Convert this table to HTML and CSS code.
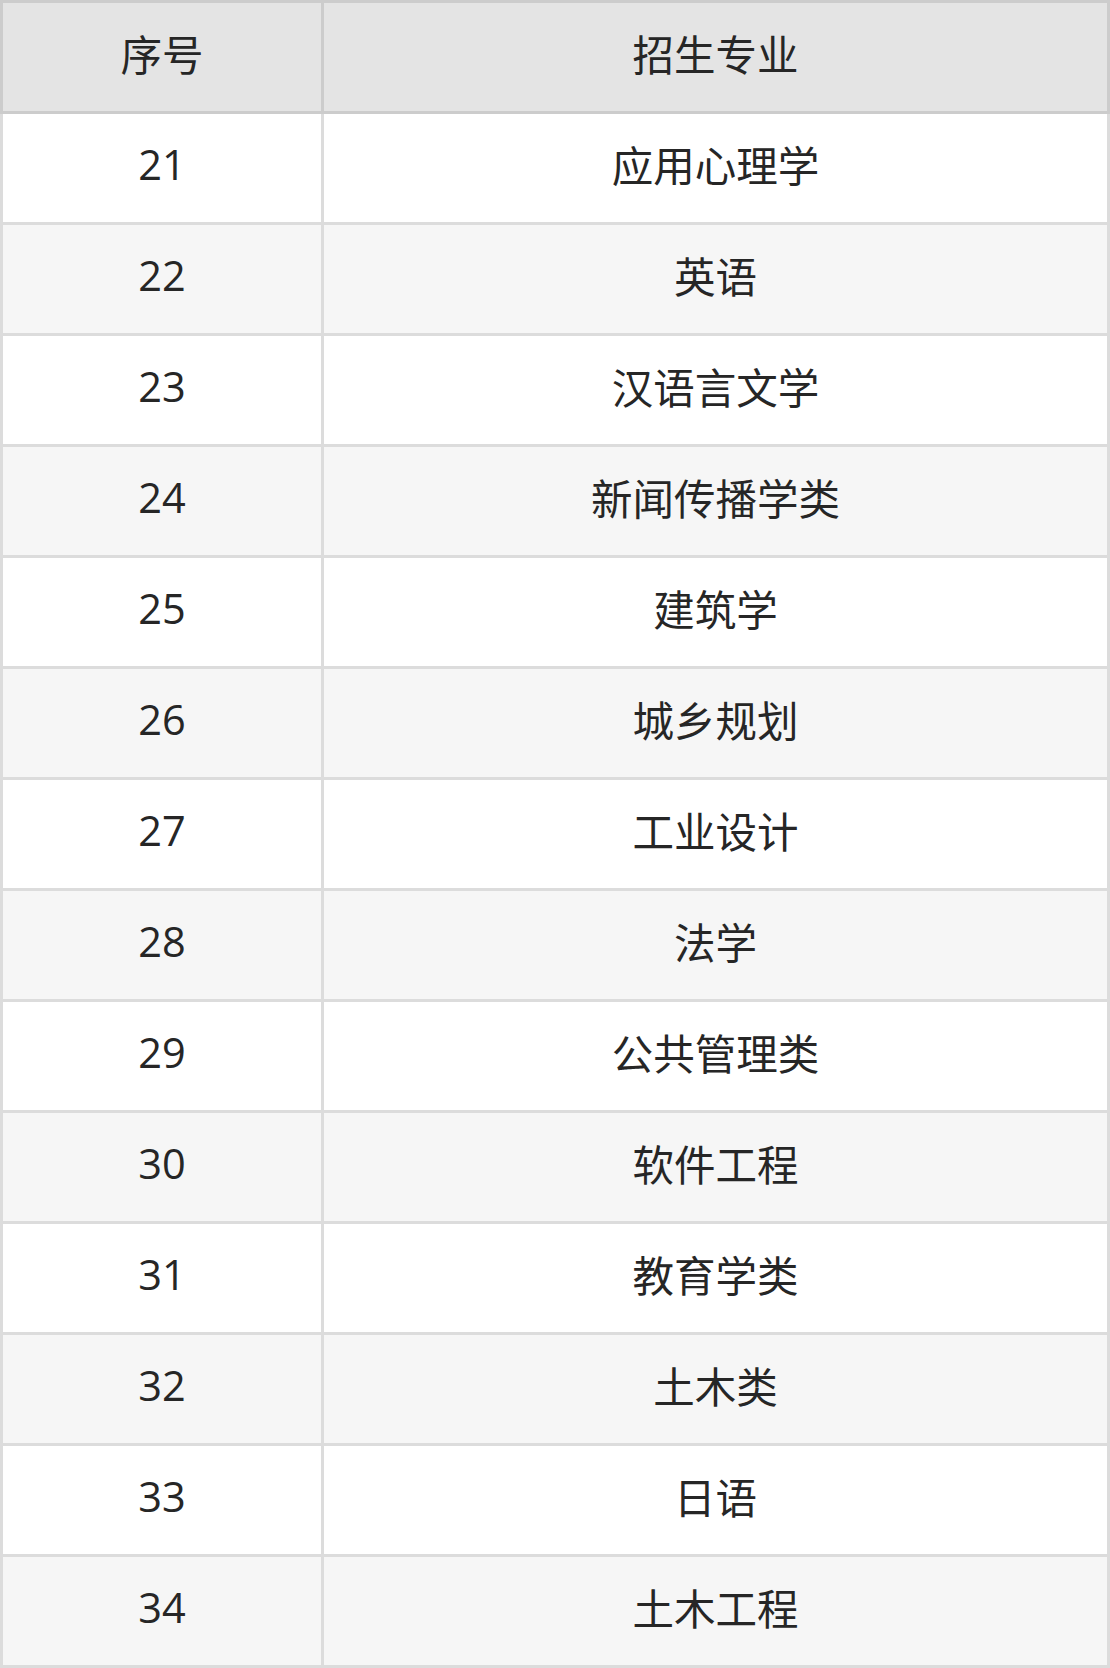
FILE: index.html
```html
<!DOCTYPE html>
<html lang="zh">
<head>
<meta charset="utf-8">
<title>招生专业</title>
<link rel="stylesheet" href="styles.css">
</head>
<body>
<div class="table">
  <div class="row head"><div class="cell c1">序号</div><div class="cell c2">招生专业</div></div>
  <div class="row"><div class="cell c1">21</div><div class="cell c2">应用心理学</div></div>
  <div class="row alt"><div class="cell c1">22</div><div class="cell c2">英语</div></div>
  <div class="row"><div class="cell c1">23</div><div class="cell c2">汉语言文学</div></div>
  <div class="row alt"><div class="cell c1">24</div><div class="cell c2">新闻传播学类</div></div>
  <div class="row"><div class="cell c1">25</div><div class="cell c2">建筑学</div></div>
  <div class="row alt"><div class="cell c1">26</div><div class="cell c2">城乡规划</div></div>
  <div class="row"><div class="cell c1">27</div><div class="cell c2">工业设计</div></div>
  <div class="row alt"><div class="cell c1">28</div><div class="cell c2">法学</div></div>
  <div class="row"><div class="cell c1">29</div><div class="cell c2">公共管理类</div></div>
  <div class="row alt"><div class="cell c1">30</div><div class="cell c2">软件工程</div></div>
  <div class="row"><div class="cell c1">31</div><div class="cell c2">教育学类</div></div>
  <div class="row alt"><div class="cell c1">32</div><div class="cell c2">土木类</div></div>
  <div class="row"><div class="cell c1">33</div><div class="cell c2">日语</div></div>
  <div class="row alt"><div class="cell c1">34</div><div class="cell c2">土木工程</div></div>
</div>
</body>
</html>
```
FILE: styles.css
```css
html, body {
  margin: 0;
  padding: 0;
  background: #ffffff;
}
.table {
  width: 1110px;
  font-family: "Open Sans", "Noto Sans CJK SC", sans-serif;
  font-size: 41.5px;
  color: #262626;
}
.row {
  display: grid;
  grid-template-columns: 324px 786px;
  background: #ffffff;
}
.row.alt {
  background: #f6f6f6;
}
.cell {
  box-sizing: border-box;
  height: 111px;
  display: flex;
  align-items: center;
  justify-content: center;
  border-right: 3px solid #dcdcdc;
  border-bottom: 3px solid #dcdcdc;
  padding-bottom: 8px;
}
.c1 {
  border-left: 3px solid #dcdcdc;
}
.head {
  background: #e4e4e4;
}
.head .cell {
  height: 114px;
  border-top: 3px solid #cccccc;
  border-right-color: #cccccc;
  border-bottom-color: #cccccc;
}
.head .c1 {
  border-left-color: #cccccc;
}
```
